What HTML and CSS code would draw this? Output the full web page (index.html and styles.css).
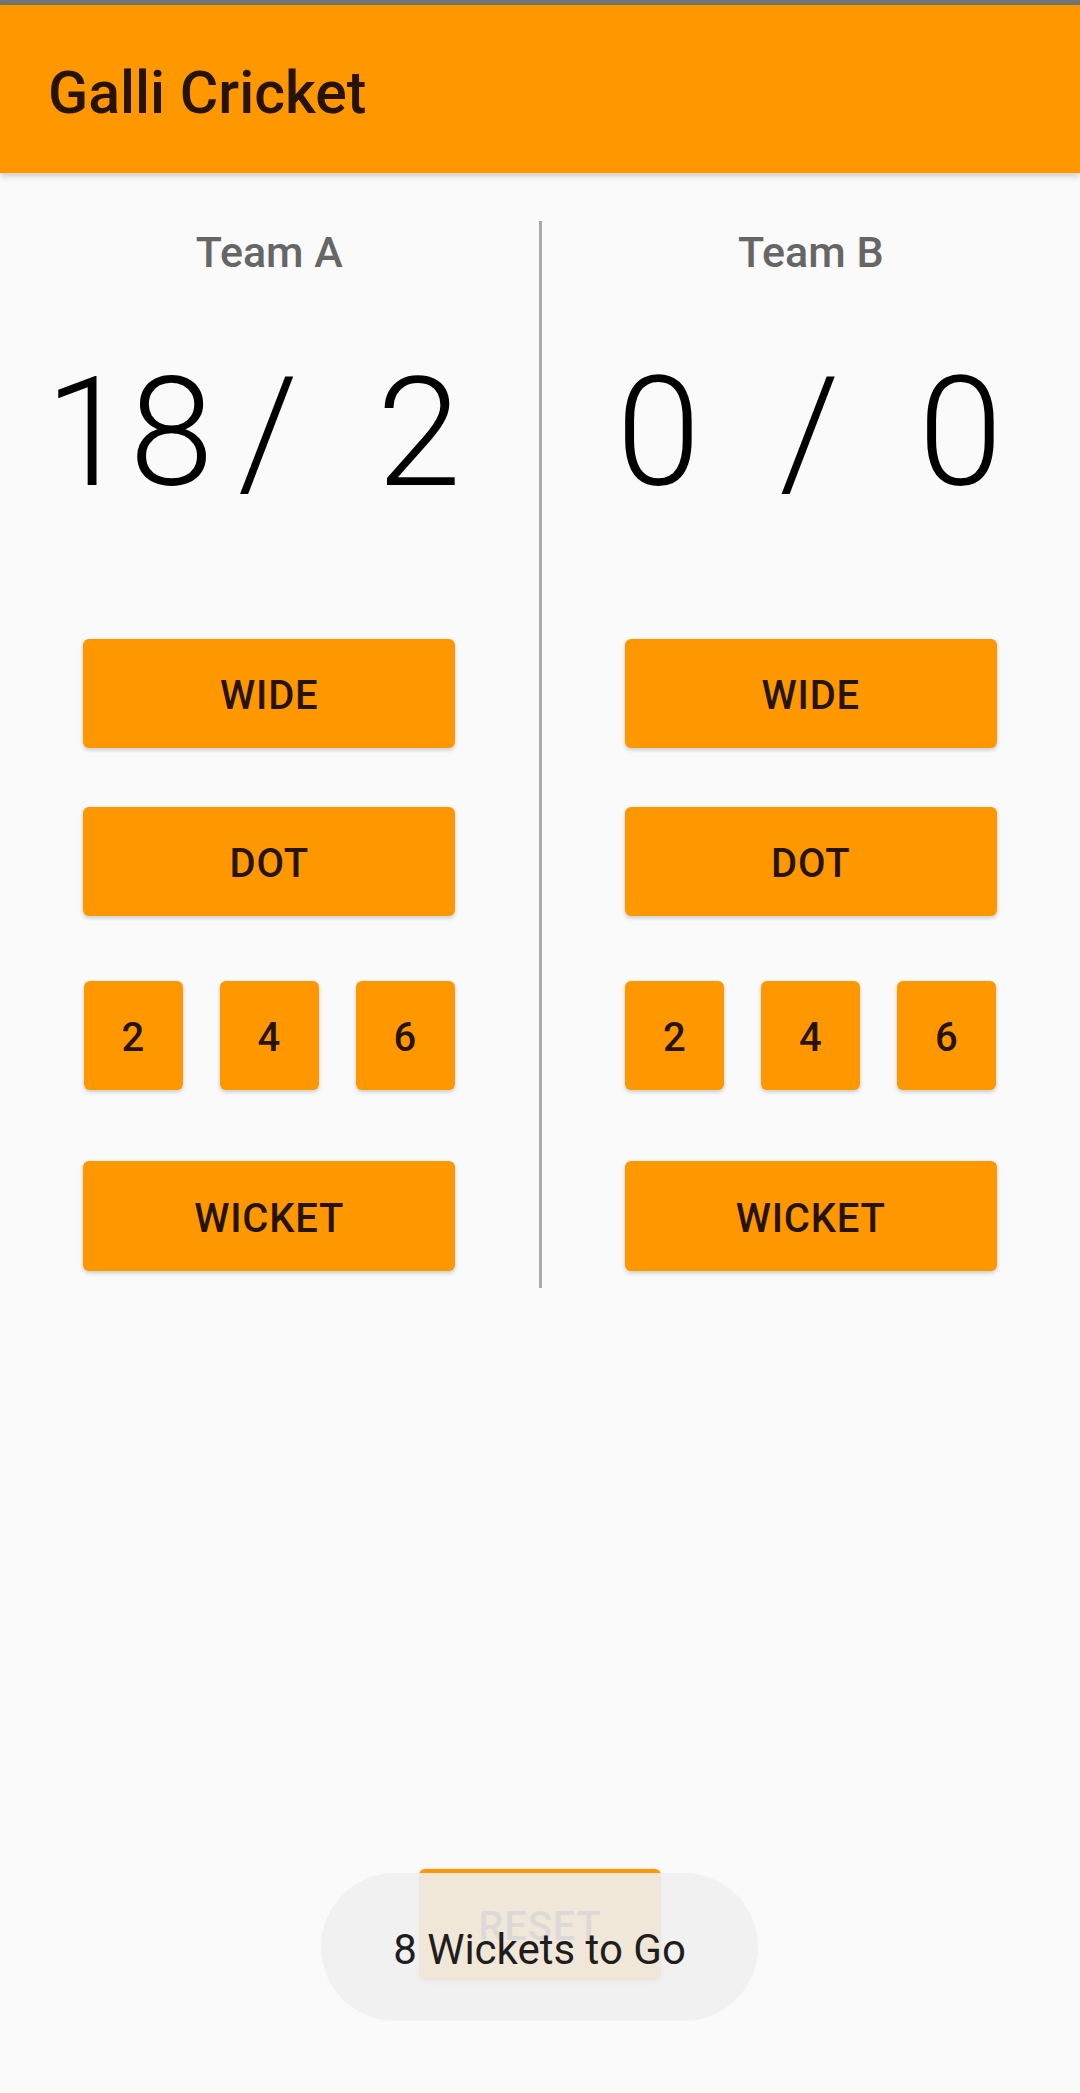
FILE: index.html
```html
<!DOCTYPE html>
<html>
<head>
<meta charset="utf-8">
<link rel="stylesheet" href="styles.css">
</head>
<body>
<div class="status"></div>
<header class="appbar"><h1 class="title">Galli Cricket</h1></header>
<main class="board">
  <section class="team">
    <div class="team-name">Team A</div>
    <div class="score"><span class="cell">18</span><span class="cell">/</span><span class="cell">2</span></div>
    <button class="btn wide first">WIDE</button>
    <button class="btn wide">DOT</button>
    <div class="runs">
      <button class="btn small">2</button>
      <button class="btn small">4</button>
      <button class="btn small">6</button>
    </div>
    <button class="btn wide wicket">WICKET</button>
  </section>
  <div class="divider"></div>
  <section class="team">
    <div class="team-name">Team B</div>
    <div class="score"><span class="cell">0</span><span class="cell">/</span><span class="cell">0</span></div>
    <button class="btn wide first">WIDE</button>
    <button class="btn wide">DOT</button>
    <div class="runs">
      <button class="btn small">2</button>
      <button class="btn small">4</button>
      <button class="btn small">6</button>
    </div>
    <button class="btn wide wicket">WICKET</button>
  </section>
</main>
<div class="spacer"></div>
<div class="footer"><button class="btn reset">RESET</button></div>
<div class="toast">8 Wickets to Go</div>
</body>
</html>
```
FILE: styles.css
```css
html, body {
  margin: 0;
  padding: 0;
}
body {
  background: #fafafa;
  font-family: Roboto, "Liberation Sans", sans-serif;
  width: 1080px;
  height: 2093px;
  display: flex;
  flex-direction: column;
  position: relative;
  overflow: hidden;
}
.status {
  height: 5px;
  background: #757575;
  flex: none;
}
.appbar {
  flex: none;
  height: 168px;
  box-sizing: border-box;
  background: #ff9800;
  padding: 8px 0 0 48px;
  box-shadow: 0 3px 6px rgba(0, 0, 0, 0.18);
  position: relative;
  z-index: 2;
}
.title {
  margin: 0;
  font-size: 59px;
  line-height: 160px;
  font-weight: 500;
  color: #261400;
}
.board {
  flex: none;
  display: flex;
  margin-top: 48px;
}
.team {
  flex: 1;
  display: flex;
  flex-direction: column;
  align-items: center;
  padding-bottom: 17px;
}
.divider {
  width: 3px;
  background: #aaaaaa;
  flex: none;
}
.team-name {
  margin-top: 6px;
  font-size: 43px;
  line-height: 50px;
  font-weight: 500;
  color: #666666;
}
.score {
  align-self: stretch;
  display: flex;
  gap: 7px;
  padding-left: 45px;
  margin-top: 66px;
  font-size: 152px;
  line-height: 180px;
  font-weight: 300;
  color: #000;
}
.cell {
  width: 144px;
  text-align: center;
}
.btn {
  border: none;
  margin: 0;
  padding: 4px 0 0;
  background: #ff9800;
  color: #261400;
  font-family: Roboto, "Liberation Sans", sans-serif;
  font-weight: 500;
  font-size: 40px;
  letter-spacing: 0.02em;
  border-radius: 6px;
  box-shadow: 0 2px 4px rgba(0, 0, 0, 0.2);
}
.wide {
  width: 372px;
  height: 109px;
  margin-top: 59px;
}
.wide.first {
  margin-top: 116px;
}
.runs {
  display: flex;
  gap: 37px;
  margin-top: 65px;
}
.small {
  width: 99px;
  height: 109px;
}
.wide.wicket {
  margin-top: 71px;
  height: 110px;
}
.spacer {
  flex: 1;
}
.footer {
  flex: none;
  display: flex;
  justify-content: center;
  margin-bottom: 113px;
}
.reset {
  width: 242px;
  height: 111px;
  box-shadow: 0 2px 5px rgba(0, 0, 0, 0.2);
}
.toast {
  position: absolute;
  left: 321px;
  top: 1873px;
  width: 437px;
  height: 148px;
  box-sizing: border-box;
  padding-top: 6px;
  border-radius: 74px;
  background: rgba(240, 240, 240, 0.9);
  color: #1e1e1e;
  font-size: 42px;
  line-height: 142px;
  text-align: center;
  z-index: 5;
}
```
